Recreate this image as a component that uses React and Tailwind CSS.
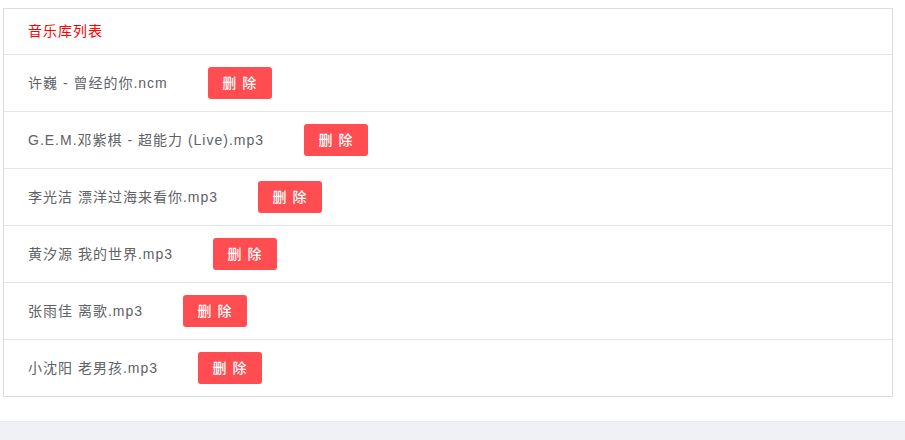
import React from "react";

const songs = [
  "许巍 - 曾经的你.ncm",
  "G.E.M.邓紫棋 - 超能力 (Live).mp3",
  "李光洁 漂洋过海来看你.mp3",
  "黄汐源 我的世界.mp3",
  "张雨佳 离歌.mp3",
  "小沈阳 老男孩.mp3",
];

export default function App() {
  return (
    <div
      className="w-[905px] h-[440px] flex flex-col bg-white"
      style={{ fontFamily: '"Liberation Sans", "Noto Sans CJK SC", sans-serif' }}
    >
      <div className="h-[421px] pt-2 pl-[3px] pr-3">
        <div className="w-[890px] border border-[#dcdcdc] bg-white">
          <div className="h-[46px] flex items-center pl-[24px] text-[14px] tracking-[1px] text-[#ff0000] border-b border-[#e5e5e5]">
            音乐库列表
          </div>
          {songs.map((s, i) => (
            <div
              key={i}
              className={`flex items-center pl-[24px] ${i < songs.length - 1 ? "h-[57px] border-b border-[#e5e5e5]" : "h-[56px]"}`}
            >
              <span className="text-[14px] tracking-[1px] text-[#606266]">{s}</span>
              <button className="ml-[40px] w-[64px] h-[32px] rounded-[3px] bg-[#ff4d51] text-white text-[14px] font-medium tracking-[1px] flex items-center justify-center">
                删 除
              </button>
            </div>
          ))}
        </div>
      </div>
      <div className="flex-1 bg-[#f0f1f5] border-t border-[#e6e7eb]"></div>
    </div>
  );
}
